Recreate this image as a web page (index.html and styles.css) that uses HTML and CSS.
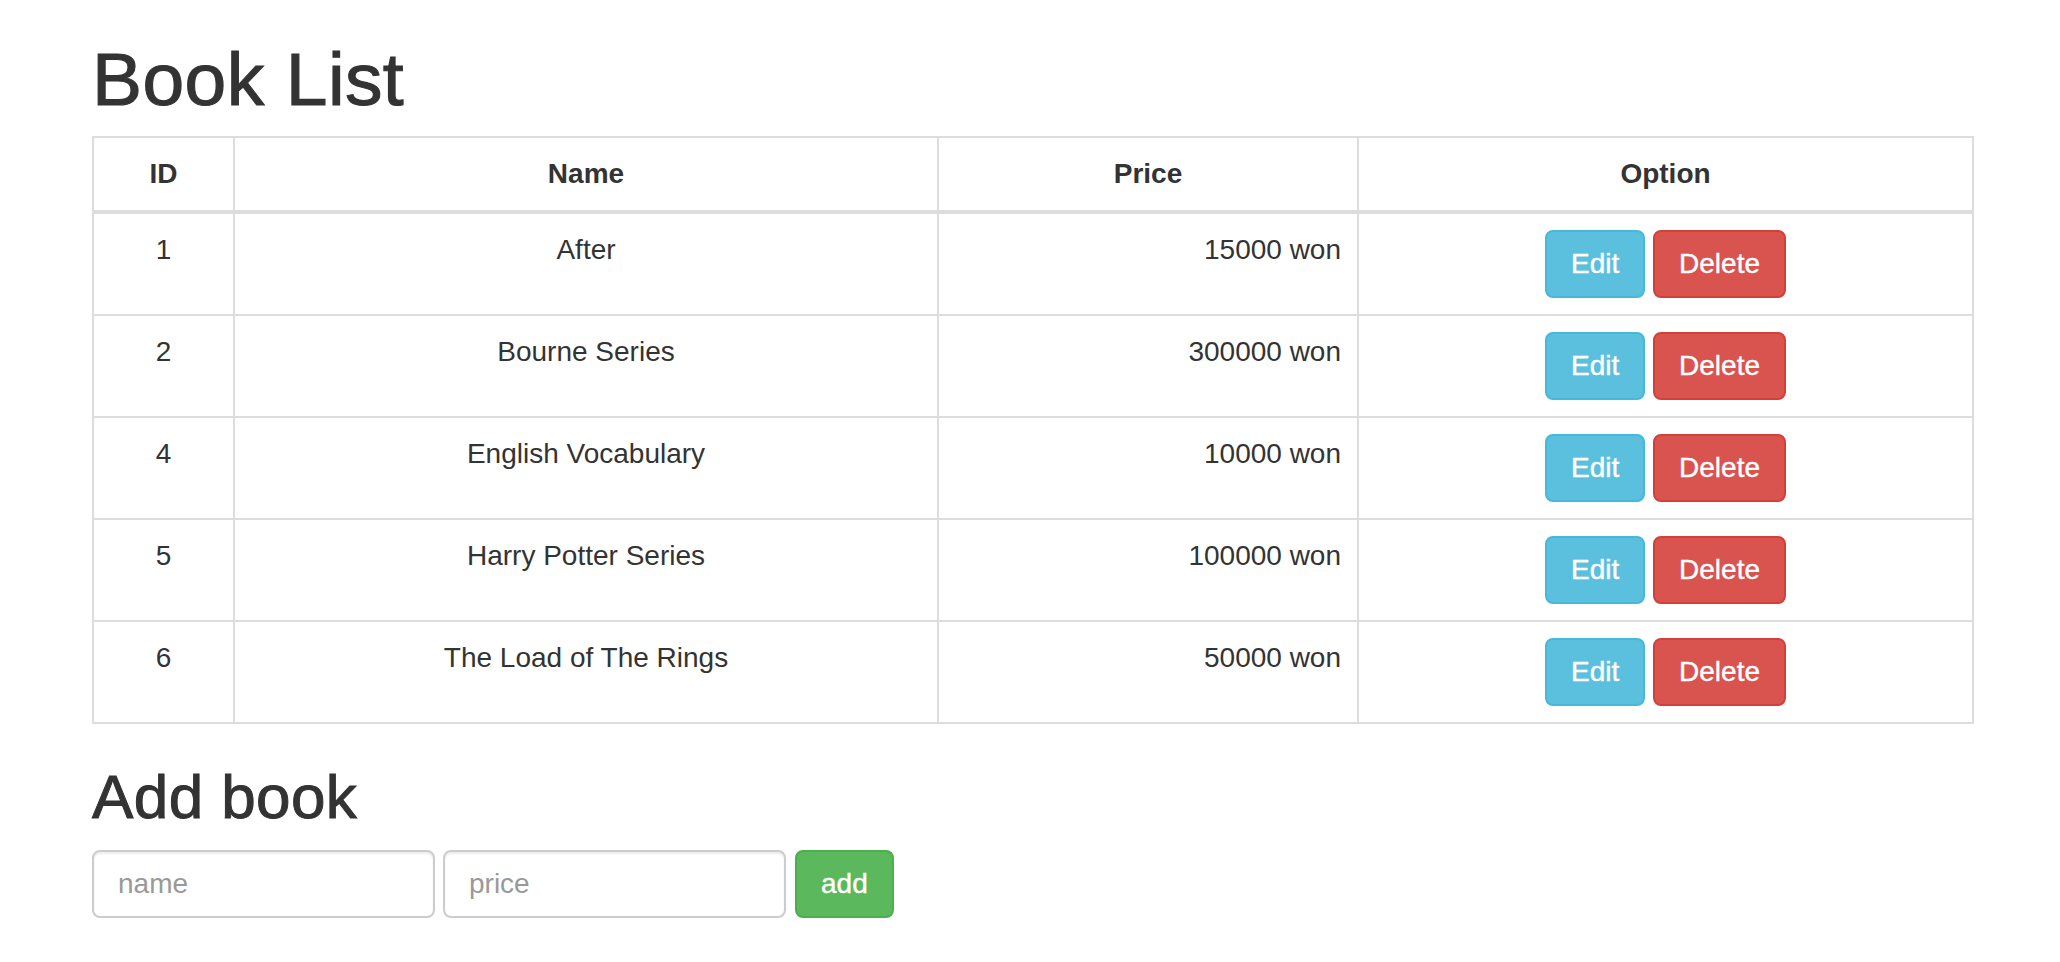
FILE: index.html
```html
<!DOCTYPE html>
<html lang="en">
<head>
<meta charset="utf-8">
<title>Book List</title>
<link rel="stylesheet" href="styles.css">
</head>
<body>
<div class="container">
  <h1 class="title">Book List</h1>
  <table class="book-table">
    <colgroup>
      <col class="col-id">
      <col class="col-name">
      <col class="col-price">
      <col class="col-option">
    </colgroup>
    <thead>
      <tr>
        <th>ID</th>
        <th>Name</th>
        <th>Price</th>
        <th>Option</th>
      </tr>
    </thead>
    <tbody>
      <tr>
        <td class="c">1</td>
        <td class="c">After</td>
        <td class="r">15000 won</td>
        <td class="c"><button class="btn btn-info">Edit</button> <button class="btn btn-danger">Delete</button></td>
      </tr>
      <tr>
        <td class="c">2</td>
        <td class="c">Bourne Series</td>
        <td class="r">300000 won</td>
        <td class="c"><button class="btn btn-info">Edit</button> <button class="btn btn-danger">Delete</button></td>
      </tr>
      <tr>
        <td class="c">4</td>
        <td class="c">English Vocabulary</td>
        <td class="r">10000 won</td>
        <td class="c"><button class="btn btn-info">Edit</button> <button class="btn btn-danger">Delete</button></td>
      </tr>
      <tr>
        <td class="c">5</td>
        <td class="c">Harry Potter Series</td>
        <td class="r">100000 won</td>
        <td class="c"><button class="btn btn-info">Edit</button> <button class="btn btn-danger">Delete</button></td>
      </tr>
      <tr>
        <td class="c">6</td>
        <td class="c">The Load of The Rings</td>
        <td class="r">50000 won</td>
        <td class="c"><button class="btn btn-info">Edit</button> <button class="btn btn-danger">Delete</button></td>
      </tr>
    </tbody>
  </table>
  <h2 class="subtitle">Add book</h2>
  <form class="add-form">
    <input class="form-control" type="text" placeholder="name">
    <input class="form-control" type="text" placeholder="price">
    <button type="button" class="btn btn-success">add</button>
  </form>
</div>
</body>
</html>
```

FILE: styles.css
```css
html, body {
  margin: 0;
  padding: 0;
  background: #fff;
}
body {
  font-family: "Liberation Sans", Arial, Helvetica, sans-serif;
  font-size: 28px;
  line-height: 40px;
  color: #333;
}
.container {
  width: 1880px;
  padding-left: 92px;
}
.title {
  margin: 40px 0 17px;
  font-size: 75px;
  line-height: 79px;
  font-weight: 500;
  letter-spacing: 0.4px;
  -webkit-text-stroke: 1.1px #333;
}
.book-table {
  width: 1880px;
  table-layout: fixed;
  border-collapse: collapse;
  border-spacing: 0;
  margin-bottom: 40px;
}
.col-id { width: 141px; }
.col-name { width: 704px; }
.col-price { width: 420px; }
.col-option { width: 615px; }
.book-table th,
.book-table td {
  border: 2px solid #ddd;
  padding: 16px;
  line-height: 40px;
  vertical-align: top;
}
.book-table th {
  font-weight: bold;
  text-align: center;
  vertical-align: bottom;
  border-bottom-width: 4px;
}
.c { text-align: center; }
.r { text-align: right; }
.btn {
  display: inline-block;
  font-family: inherit;
  font-size: 28px;
  line-height: 40px;
  padding: 12px 24px;
  border: 2px solid transparent;
  border-radius: 8px;
  color: #fff;
  vertical-align: middle;
  cursor: pointer;
  margin: 0;
  -webkit-text-stroke: 0.4px #fff;
}
.btn-info { background: #5bc0de; border-color: #46b8da; }
.btn-danger { background: #d9534f; border-color: #d43f3a; }
.btn-success { background: #5cb85c; border-color: #4cae4c; }
.subtitle {
  margin: 40px 0 20px;
  font-size: 62px;
  line-height: 66px;
  font-weight: 500;
  letter-spacing: 0.4px;
  -webkit-text-stroke: 1px #333;
}
.add-form {
  display: flex;
  gap: 8px;
  align-items: center;
}
.add-form .btn { margin-left: 1px; }
.form-control {
  box-sizing: border-box;
  width: 343px;
  height: 68px;
  padding: 12px 24px;
  font-family: inherit;
  font-size: 28px;
  line-height: 40px;
  color: #555;
  background: #fff;
  border: 2px solid #ccc;
  border-radius: 8px;
  box-shadow: inset 0 2px 2px rgba(0, 0, 0, 0.075);
  margin: 0;
}
.form-control::placeholder { color: #999; }
```
